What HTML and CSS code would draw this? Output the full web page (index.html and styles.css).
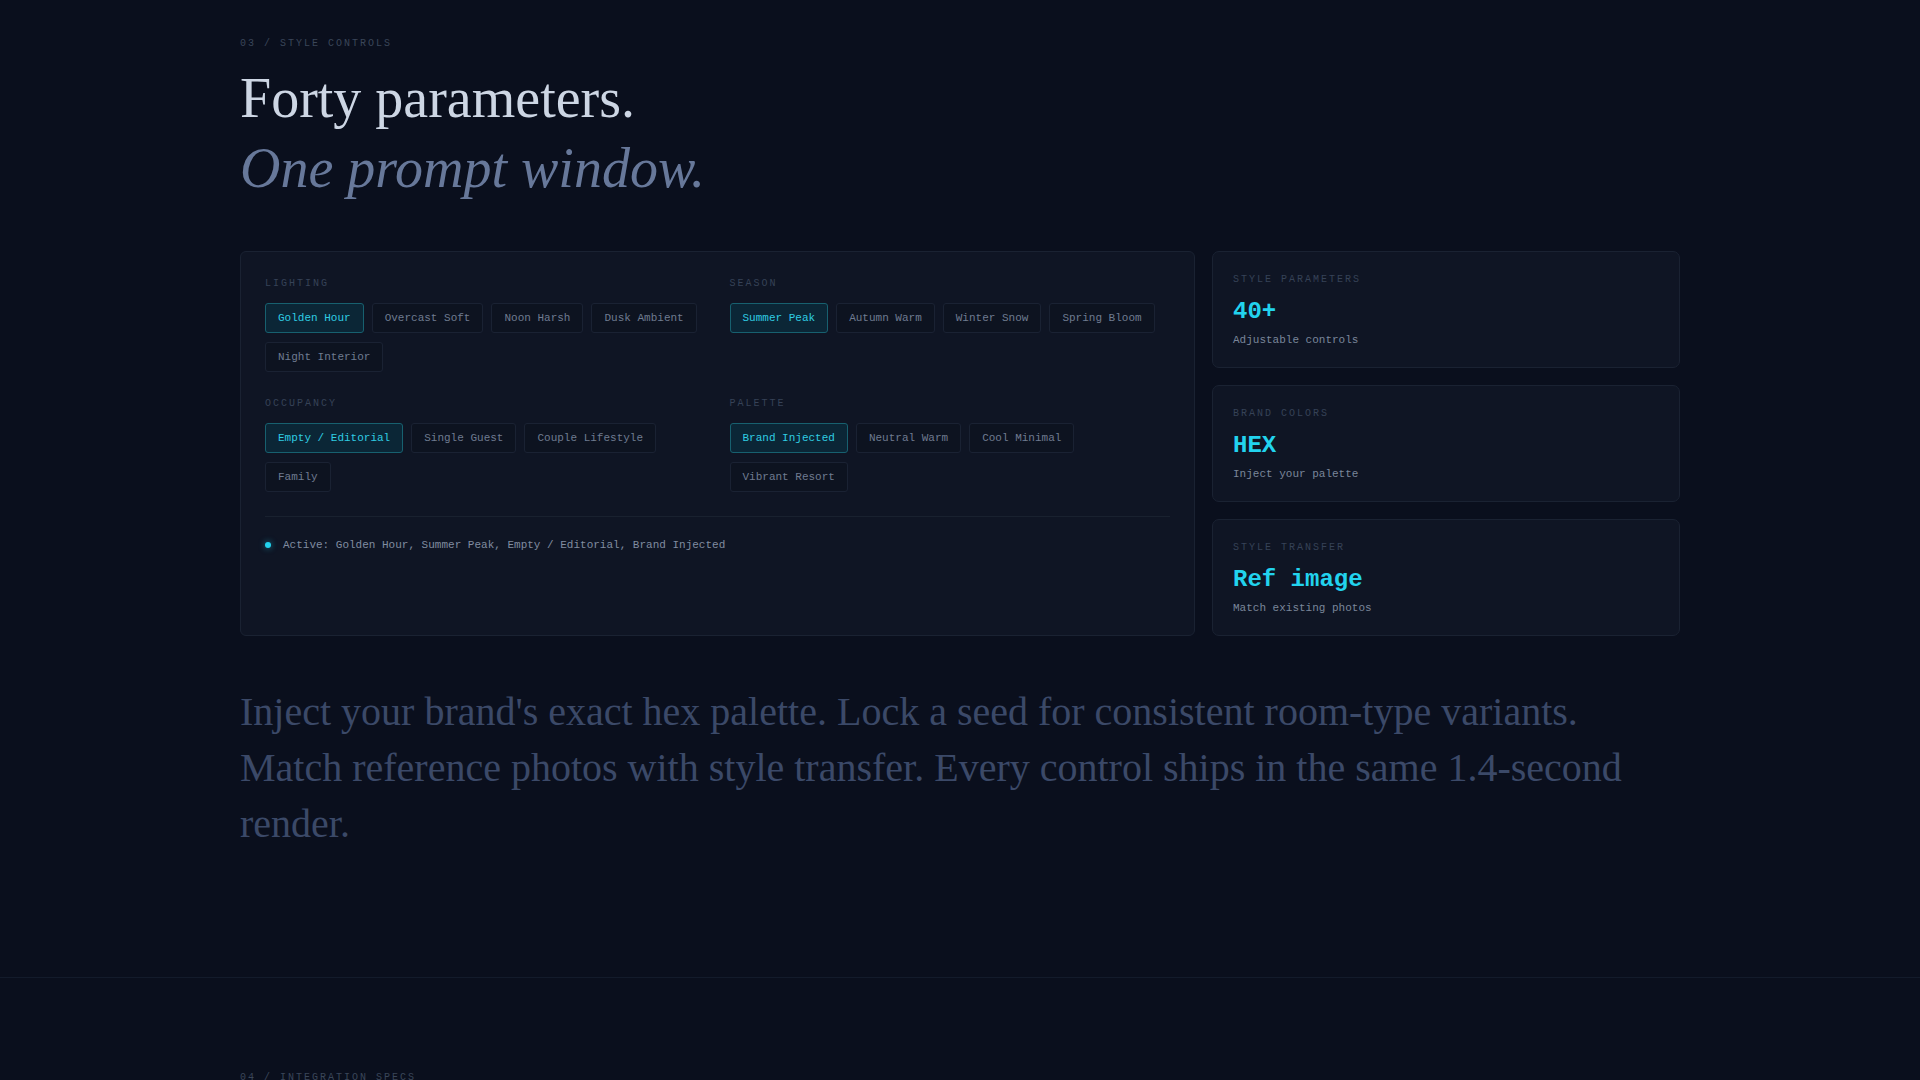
FILE: index.html
```html
<!DOCTYPE html>
<html lang="en">
<head>
<meta charset="utf-8">
<title>Style Controls</title>
<link rel="stylesheet" href="styles.css">
</head>
<body>
<section class="section section-controls">
  <div class="container">
    <div class="eyebrow">03 / STYLE CONTROLS</div>
    <h2 class="title">
      <span class="title-main">Forty parameters.</span>
      <span class="title-sub">One prompt window.</span>
    </h2>
    <div class="layout">
      <div class="panel">
        <div class="groups">
          <div class="group">
            <div class="group-label">LIGHTING</div>
            <div class="chips">
              <span class="chip chip-active">Golden Hour</span>
              <span class="chip">Overcast Soft</span>
              <span class="chip">Noon Harsh</span>
              <span class="chip">Dusk Ambient</span>
              <span class="chip">Night Interior</span>
            </div>
          </div>
          <div class="group">
            <div class="group-label">SEASON</div>
            <div class="chips">
              <span class="chip chip-active">Summer Peak</span>
              <span class="chip">Autumn Warm</span>
              <span class="chip">Winter Snow</span>
              <span class="chip">Spring Bloom</span>
            </div>
          </div>
          <div class="group">
            <div class="group-label">OCCUPANCY</div>
            <div class="chips">
              <span class="chip chip-active">Empty / Editorial</span>
              <span class="chip">Single Guest</span>
              <span class="chip">Couple Lifestyle</span>
              <span class="chip">Family</span>
            </div>
          </div>
          <div class="group">
            <div class="group-label">PALETTE</div>
            <div class="chips">
              <span class="chip chip-active">Brand Injected</span>
              <span class="chip">Neutral Warm</span>
              <span class="chip">Cool Minimal</span>
              <span class="chip">Vibrant Resort</span>
            </div>
          </div>
        </div>
        <div class="active-row">
          <span class="dot"></span>
          <span class="active-text">Active: Golden Hour, Summer Peak, Empty / Editorial, Brand Injected</span>
        </div>
      </div>
      <div class="stats">
        <div class="stat">
          <div class="stat-label">STYLE PARAMETERS</div>
          <div class="stat-value">40+</div>
          <div class="stat-sub">Adjustable controls</div>
        </div>
        <div class="stat">
          <div class="stat-label">BRAND COLORS</div>
          <div class="stat-value">HEX</div>
          <div class="stat-sub">Inject your palette</div>
        </div>
        <div class="stat">
          <div class="stat-label">STYLE TRANSFER</div>
          <div class="stat-value">Ref image</div>
          <div class="stat-sub">Match existing photos</div>
        </div>
      </div>
    </div>
    <p class="lede">Inject your brand's exact hex palette. Lock a seed for consistent room-type variants. Match reference photos with style transfer. Every control ships in the same 1.4-second render.</p>
  </div>
</section>
<section class="section section-next">
  <div class="container">
    <div class="eyebrow">04 / INTEGRATION SPECS</div>
  </div>
</section>
</body>
</html>
```

FILE: styles.css
```css
html, body {
  margin: 0;
  padding: 0;
  background: #0a0f1d;
}

body {
  font-family: "Liberation Mono", "DejaVu Sans Mono", monospace;
  color: #8490a4;
  height: 1080px;
  overflow: hidden;
}

.container {
  width: 1440px;
  margin: 0 auto;
}

.section-controls {
  padding: 38px 0 125px;
  border-bottom: 1px solid #131b2b;
}

.section-next {
  padding-top: 94px;
}

.eyebrow {
  font-size: 10px;
  line-height: 12px;
  letter-spacing: 2px;
  color: #3a4659;
}

.title {
  margin: 13px 0 0;
  font-family: "Liberation Serif", "Times New Roman", serif;
  font-weight: 400;
  font-size: 56px;
  line-height: 70px;
}

.title-main,
.title-sub {
  display: block;
}

.title-main {
  color: #cdd6e4;
}

.title-sub {
  font-style: italic;
  color: #67789a;
}

.layout {
  margin-top: 48px;
  display: grid;
  grid-template-columns: 1fr 468px;
  gap: 17px;
}

.panel {
  background: #0f1524;
  border: 1px solid #1a2232;
  border-radius: 6px;
  padding: 25px 24px 24px;
}

.groups {
  display: grid;
  grid-template-columns: 1fr 1fr;
  column-gap: 24px;
  row-gap: 25px;
}

.group-label {
  font-size: 10px;
  line-height: 14px;
  letter-spacing: 2px;
  color: #364257;
  margin-bottom: 12px;
}

.chips {
  display: flex;
  flex-wrap: wrap;
  gap: 9px 8px;
}

.chip {
  display: inline-block;
  font-size: 11px;
  line-height: 16px;
  padding: 6px 12px;
  border: 1px solid #1a2233;
  border-radius: 3px;
  background: #0d1320;
  color: #6f7b90;
  white-space: nowrap;
}

.chip-active {
  background: #0b2636;
  border-color: #17606f;
  color: #2fcde3;
}

.active-row {
  margin-top: 24px;
  border-top: 1px solid #19212f;
  padding-top: 20px;
  display: flex;
  align-items: center;
  gap: 12px;
}

.dot {
  width: 6px;
  height: 6px;
  border-radius: 50%;
  background: #22d3ee;
  box-shadow: 0 0 6px rgba(34, 211, 238, 0.6);
  flex: none;
}

.active-text {
  font-size: 11px;
  line-height: 16px;
  color: #808ca0;
}

.stats {
  display: flex;
  flex-direction: column;
  gap: 17px;
}

.stat {
  flex: 1;
  background: #0f1524;
  border: 1px solid #1a2232;
  border-radius: 7px;
  padding: 22px 20px 19px;
}

.stat-label {
  font-size: 10px;
  line-height: 12px;
  letter-spacing: 2px;
  color: #364257;
}

.stat-value {
  margin-top: 10px;
  font-size: 24px;
  line-height: 32px;
  font-weight: 700;
  color: #22d3ee;
}

.stat-sub {
  margin-top: 4px;
  font-size: 11px;
  line-height: 16px;
  color: #7a869a;
}

.lede {
  margin: 48px 0 0;
  font-family: "Liberation Serif", "Times New Roman", serif;
  font-size: 40px;
  line-height: 56px;
  color: #3b4968;
}
```
